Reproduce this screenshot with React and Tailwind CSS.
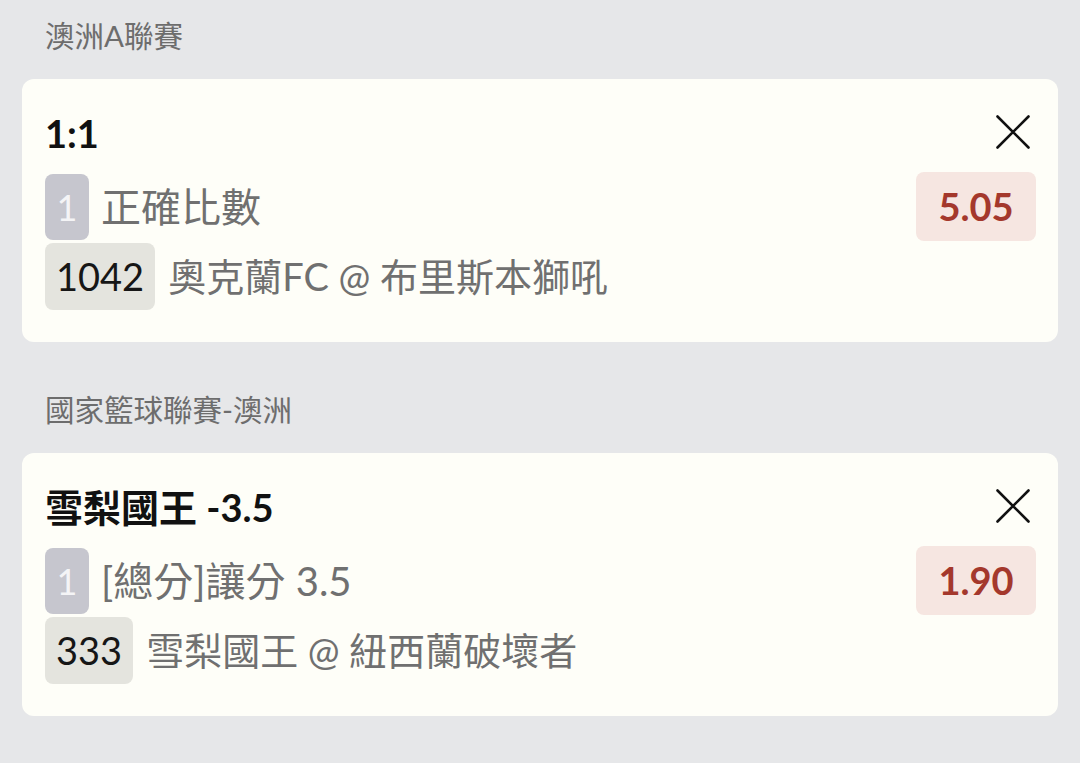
import React from "react";

const bets = [
  {
    league: "澳洲A聯賽",
    title: "1:1",
    market: "正確比數",
    code: "1042",
    match: "奧克蘭FC @ 布里斯本獅吼",
    odds: "5.05",
  },
  {
    league: "國家籃球聯賽-澳洲",
    title: "雪梨國王 -3.5",
    market: "[總分]讓分 3.5",
    code: "333",
    match: "雪梨國王 @ 紐西蘭破壞者",
    odds: "1.90",
  },
];

function CloseIcon() {
  return (
    <svg width="34" height="34" viewBox="0 0 34 34" fill="none">
      <path d="M1.5 1.5 L32.5 32.5 M32.5 1.5 L1.5 32.5" stroke="#111" strokeWidth="2.6" strokeLinecap="round" />
    </svg>
  );
}

function BetCard({ bet }) {
  return (
    <div>
      <div className="px-[45px] h-[40px] leading-[40px] text-[29.5px] text-[#6d6d6d]">{bet.league}</div>
      <div className="mt-[23px] mx-[22px] h-[263px] rounded-xl bg-[#fefef8] flex pl-[23px] pr-[22px]">
        {/* left: selection details */}
        <div className="flex-1 flex flex-col pt-[31px]">
          <div className="h-[46px] leading-[46px] text-[38px] font-bold text-[#111]">{bet.title}</div>
          <div className="mt-[18px] flex items-center gap-[12px] h-[66px]">
            <div className="w-[44px] h-[66px] rounded-lg bg-[#c6c6ce] flex items-center justify-center text-[36px] text-[#f4f4f6]">
              1
            </div>
            <span className="text-[40px] text-[#707070]">{bet.market}</span>
          </div>
          <div className="mt-[3px] flex items-center gap-[13px] h-[67px]">
            <div className="h-[67px] px-[11px] rounded-lg bg-[#e4e4de] flex items-center text-[38px] text-[#161616]">
              {bet.code}
            </div>
            <span className="text-[38px] text-[#707070]">{bet.match}</span>
          </div>
        </div>

        {/* right: remove + odds */}
        <div className="flex flex-col items-end pt-[36px]">
          <div className="mr-[6px]">
            <CloseIcon />
          </div>
          <div className="mt-[23px] w-[120px] h-[69px] rounded-lg bg-[#f6e6e1] flex items-center justify-center text-[38px] font-bold text-[#a4382c]">
            {bet.odds}
          </div>
        </div>
      </div>
    </div>
  );
}

export default function App() {
  return (
    <div
      className="w-[1080px] h-[763px] bg-[#e6e7e9] pt-[16px] flex flex-col gap-[48px] overflow-hidden"
      style={{ fontFamily: "Lato, 'Noto Sans CJK TC', sans-serif" }}
    >
      {bets.map((b) => (
        <BetCard key={b.code} bet={b} />
      ))}
    </div>
  );
}
